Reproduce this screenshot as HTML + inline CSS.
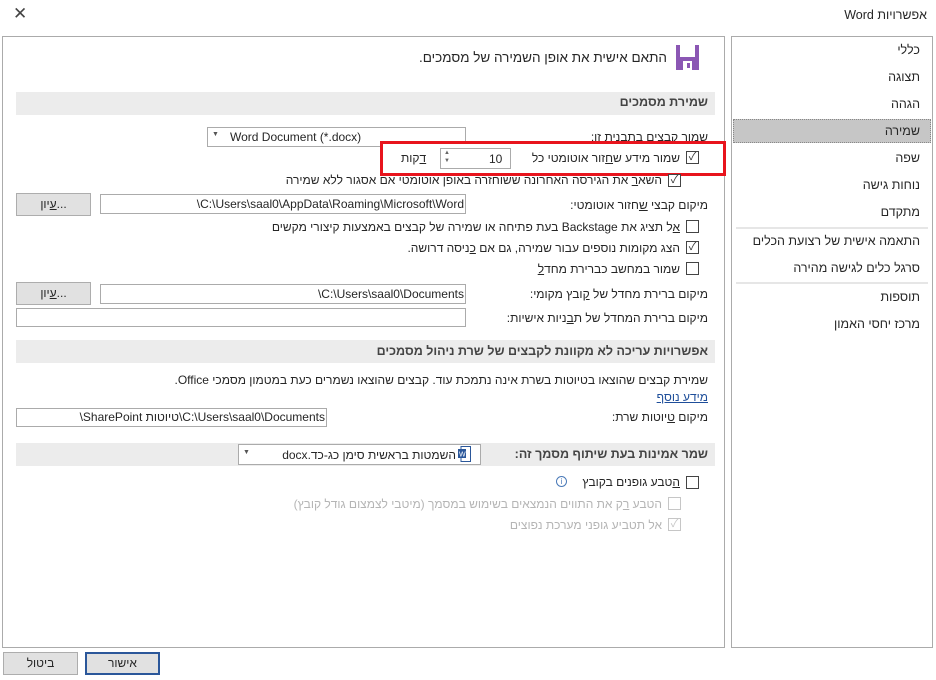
<!DOCTYPE html>
<html><head><meta charset="utf-8"><style>
*{margin:0;padding:0;box-sizing:border-box}
body{width:936px;height:680px;background:#fff;position:relative;overflow:hidden;font-family:"Liberation Sans","Noto Sans CJK JP",sans-serif;font-size:12px;color:#262626}
.a{position:absolute;white-space:nowrap}
.r{position:absolute;white-space:nowrap;direction:rtl;text-align:right}
.p{position:absolute;white-space:nowrap;direction:ltr;text-align:right;unicode-bidi:isolate}
.box{position:absolute;border:1px solid #ababab;background:#fff}
.bar{position:absolute;left:16px;width:699px;background:#ececec}
.bold{font-weight:bold;color:#444}
.cb{position:absolute;width:13px;height:13px;border:1px solid #444;background:#fff;font-size:11px;line-height:11px;text-align:center;color:#333}
.dis{border-color:#c6c6c6;color:#c6c6c6}
.btn{position:absolute;background:#e1e1e1;border:1px solid #adadad;text-align:center;line-height:20px}
.side{position:absolute;right:16px;direction:rtl;font-size:12.5px}
u{text-decoration:underline}
</style></head><body>
<div class="r" style="right:9px;top:8px;font-size:12.5px">אפשרויות Word</div>
<div class="a" style="left:13px;top:4px;font-size:17px;color:#444">✕</div>

<div style="position:absolute;left:2px;top:36px;width:723px;height:612px;border:1px solid #ababab"></div>
<div style="position:absolute;left:731px;top:36px;width:202px;height:612px;border:1px solid #ababab"></div>

<div class="side" style="top:43px">כללי</div>
<div class="side" style="top:70px">תצוגה</div>
<div class="side" style="top:97px">הגהה</div>
<div style="position:absolute;left:733px;top:119px;width:198px;height:24px;background:#c6c6c6;border:1px dotted #888"></div>
<div class="side" style="top:124px">שמירה</div>
<div class="side" style="top:151px">שפה</div>
<div class="side" style="top:178px">נוחות גישה</div>
<div class="side" style="top:205px">מתקדם</div>
<div style="position:absolute;left:736px;top:227px;width:192px;height:2px;background:#e6e6e6"></div>
<div class="side" style="top:234px">התאמה אישית של רצועת הכלים</div>
<div class="side" style="top:261px">סרגל כלים לגישה מהירה</div>
<div style="position:absolute;left:736px;top:282px;width:192px;height:2px;background:#e6e6e6"></div>
<div class="side" style="top:290px">תוספות</div>
<div class="side" style="top:317px">מרכז יחסי האמון</div>

<svg class="a" style="left:676px;top:45px" width="23" height="25" viewBox="0 0 23 25"><rect x="0" y="0" width="23" height="25" fill="#8b57b4"/><rect x="4" y="0" width="15" height="12" fill="#fff"/><rect x="7" y="16" width="9" height="9" fill="#fff"/><rect x="11" y="18" width="3" height="5" fill="#8b57b4"/></svg>
<div class="r" style="right:269px;top:50px;font-size:13.5px">התאם אישית את אופן השמירה של מסמכים.</div>

<div class="bar" style="top:92px;height:23px"></div>
<div class="r bold" style="right:228px;top:95px;font-size:12.5px">שמירת מסמכים</div>

<div class="r" style="right:228px;top:130px">שמור קבצים בתבנית זו:</div>
<div class="box" style="left:207px;top:127px;width:259px;height:20px"></div>
<div class="a" style="left:212px;top:131px;font-size:7px;color:#555">▼</div>
<div class="a" style="left:230px;top:130px">Word Document (*.docx)</div>

<div style="position:absolute;left:380px;top:141px;width:346px;height:35px;border:3px solid #e8141d;background:#fff"></div>
<div class="cb" style="left:686px;top:151px">✓</div>
<div class="r" style="right:256px;top:151px">שמור מידע ש<u>ח</u>זור אוטומטי כל</div>
<div class="box" style="left:440px;top:148px;width:71px;height:21px"></div>
<div class="a" style="left:444px;top:149px;font-size:6px;color:#666;line-height:8px">▲<br>▼</div>
<div class="a" style="left:489px;top:152px">10</div>
<div class="a" style="left:401px;top:151px"><u>ד</u>קות</div>

<div class="cb" style="left:668px;top:174px">✓</div>
<div class="r" style="right:274px;top:173px">השא<u>ר</u> את הגירסה האחרונה ששוחזרה באופן אוטומטי אם אסגור ללא שמירה</div>

<div class="r" style="right:228px;top:198px">מיקום קבצי <u>ש</u>חזור אוטומטי:</div>
<div class="box" style="left:100px;top:194px;width:366px;height:20px"></div>
<div class="p" style="right:472px;top:197px">\C:\Users\saal0\AppData\Roaming\Microsoft\Word</div>
<div class="btn" style="left:16px;top:193px;width:75px;height:23px"><u>ע</u>יון...</div>

<div class="cb" style="left:686px;top:220px"></div>
<div class="r" style="right:256px;top:220px"><u>א</u>ל תציג את Backstage בעת פתיחה או שמירה של קבצים באמצעות קיצורי מקשים</div>
<div class="cb" style="left:686px;top:241px">✓</div>
<div class="r" style="right:256px;top:241px">הצג מקומות נוספים עבור שמירה, גם אם <u>כ</u>ניסה דרושה.</div>
<div class="cb" style="left:686px;top:262px"></div>
<div class="r" style="right:256px;top:262px">שמור במחשב כברירת מחד<u>ל</u></div>

<div class="r" style="right:228px;top:287px">מיקום ברירת מחדל של <u>ק</u>ובץ מקומי:</div>
<div class="box" style="left:100px;top:284px;width:366px;height:20px"></div>
<div class="p" style="right:472px;top:287px">\C:\Users\saal0\Documents</div>
<div class="btn" style="left:16px;top:282px;width:75px;height:23px"><u>ע</u>יון...</div>

<div class="r" style="right:228px;top:311px">מיקום ברירת המחדל של ת<u>ב</u>ניות אישיות:</div>
<div class="box" style="left:16px;top:308px;width:450px;height:19px"></div>

<div class="bar" style="top:340px;height:23px"></div>
<div class="r bold" style="right:228px;top:344px;font-size:12.5px">אפשרויות עריכה לא מקוונת לקבצים של שרת ניהול מסמכים</div>
<div class="r" style="right:228px;top:373px">שמירת קבצים שהוצאו בטיוטות בשרת אינה נתמכת עוד. קבצים שהוצאו נשמרים כעת במטמון מסמכי Office.</div>
<div class="r" style="right:228px;top:390px;color:#1e4e9a"><u>מידע נוסף</u></div>
<div class="r" style="right:228px;top:410px">מיקום <u>ט</u>יוטות שרת:</div>
<div class="box" style="left:16px;top:408px;width:311px;height:19px"></div>
<div class="p" style="right:611px;top:410px">\SharePoint טיוטות\C:\Users\saal0\Documents</div>

<div class="bar" style="top:443px;height:23px"></div>
<div class="r bold" style="right:228px;top:447px;font-size:12.5px">שמר אמינות בעת שיתוף מסמך זה:</div>
<div class="box" style="left:238px;top:444px;width:243px;height:21px"></div>
<div class="a" style="left:243px;top:449px;font-size:7px;color:#555">▼</div>
<svg class="a" style="left:458px;top:446px" width="13" height="16" viewBox="0 0 13 16"><rect x="3" y="0.5" width="9.5" height="15" fill="#fff" stroke="#2b579a"/><rect x="0" y="3" width="8" height="9" fill="#2b579a"/><text x="1" y="10.5" font-size="7" fill="#fff" font-family="Liberation Sans">W</text></svg>
<div class="r" style="right:480px;top:448px">השמטות בראשית סימן כג-כד.docx</div>

<div class="cb" style="left:686px;top:476px"></div>
<div class="a" style="left:556px;top:476px;width:11px;height:11px;border:1px solid #4a7ab8;border-radius:50%;font-size:8px;line-height:9px;text-align:center;color:#4a7ab8">i</div>
<div class="r" style="right:256px;top:475px"><u>ה</u>טבע גופנים בקובץ</div>
<div class="cb dis" style="left:668px;top:497px"></div>
<div class="r" style="right:274px;top:497px;color:#b5b5b5">הטבע <u>ר</u>ק את התווים הנמצאים בשימוש במסמך (מיטבי לצמצום גודל קובץ)</div>
<div class="cb dis" style="left:668px;top:518px">✓</div>
<div class="r" style="right:274px;top:518px;color:#b5b5b5">אל תטביע גופני מערכת נפוצים</div>

<div class="btn" style="left:85px;top:652px;width:75px;height:23px;border:2px solid #2b579a;line-height:19px">אישור</div>
<div class="btn" style="left:3px;top:652px;width:75px;height:23px">ביטול</div>
</body></html>
